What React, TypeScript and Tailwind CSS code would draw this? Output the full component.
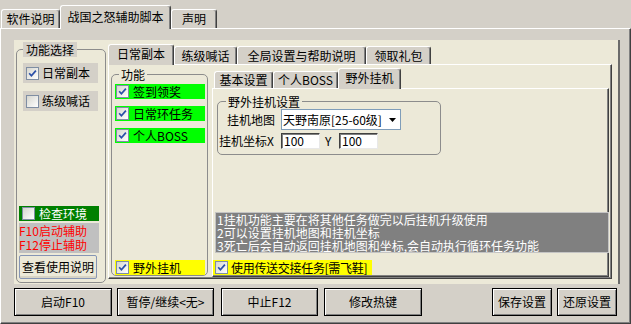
import React from 'react';
import clsx from 'clsx';

const Check = ({ checked = false }: { checked?: boolean }) => (
  <span className="inline-flex w-[13px] h-[13px] shrink-0 items-center justify-center border border-[#7f8ea3] bg-linear-to-br from-[#d6d6cf] to-white">
    {checked && (
      <svg width="9" height="9" viewBox="0 0 9 9">
        <path d="M1.2 4.3 L3.4 6.8 L7.9 1.6" fill="none" stroke="#2a4fa8" strokeWidth="1.7" />
      </svg>
    )}
  </span>
);

const Tab = ({
  children,
  active = false,
  className,
}: {
  children: React.ReactNode;
  active?: boolean;
  className: string;
}) => (
  <div
    className={clsx(
      'flex items-center justify-center shrink-0 bg-[#d4d0c8] border-t border-l border-white border-r border-r-[#404040] rounded-t-[3px] shadow-[inset_-1px_0_0_#808080] whitespace-nowrap',
      active && 'relative z-10 -mb-px pb-[2px]',
      className,
    )}
  >
    {children}
  </div>
);

const WinButton = ({ children, className }: { children: React.ReactNode; className: string }) => (
  <div
    className={clsx(
      'flex items-center justify-center shrink-0 h-[28px] border border-black bg-[#d4d0c8] shadow-[inset_1px_1px_0_#ffffff,inset_-1px_-1px_0_#808080] whitespace-nowrap',
      className,
    )}
  >
    {children}
  </div>
);

const Field = ({ children, className }: { children: React.ReactNode; className: string }) => (
  <div
    className={clsx(
      'h-[16px] bg-white border border-t-[#404040] border-l-[#404040] border-r-[#e8e8e8] border-b-[#e8e8e8] shadow-[inset_1px_1px_0_#808080] pl-[2px] leading-[14px]',
      className,
    )}
  >
    {children}
  </div>
);

const App = () => {
  return (
    <div className="w-[631px] h-[324px] bg-[#d4d0c8] overflow-hidden font-['Noto_Sans_CJK_SC','Noto_Sans',sans-serif] text-[12px] leading-[14px] text-black">
      {/* top tabs */}
      <div className="flex items-end h-[28px] pl-[1px]">
        <Tab className="w-[59px] h-[19px]">软件说明</Tab>
        <Tab active className="w-[111px] h-[24px]">
          战国之怒辅助脚本
        </Tab>
        <Tab className="w-[46px] h-[19px]">声明</Tab>
      </div>

      {/* main page */}
      <div className="w-[631px] h-[296px] border-t border-l border-white border-r border-b border-r-[#404040] border-b-[#404040] shadow-[inset_-1px_-1px_0_#808080] pt-[11px] pl-[13px]">
        <div className="flex w-[606px] h-[244px] bg-[#ece9d8] border-r-2 border-r-[#6b6b6b]">
          {/* 功能选择 */}
          <fieldset className="ml-[2px] mt-[2px] w-[90px] h-[241px] border border-[#8c8c8c] rounded-[5px] shrink-0">
            <legend className="ml-[6px] px-[3px] bg-[#d4d0c8] leading-[15px]">功能选择</legend>
            <div className="flex flex-col h-[225px] whitespace-nowrap">
              <div className="mt-[6px] ml-[6px] w-[75px] h-[20px] bg-[#d4d0c8] flex items-center pl-[3px] gap-[3px]">
                <Check checked />
                日常副本
              </div>
              <div className="mt-[8px] ml-[6px] w-[75px] h-[20px] bg-[#d4d0c8] flex items-center pl-[3px] gap-[3px]">
                <Check />
                练级喊话
              </div>
              <div className="mt-auto ml-[2px] mb-[3px] w-[80px] flex flex-col gap-[2px]">
                <div className="h-[15px] bg-[#008000] text-white flex items-center pl-[3px] gap-[4px]">
                  <Check />
                  检查环境
                </div>
                <div className="h-[30px] bg-[#c0c0c0] text-[#ff0000] pt-[1px]">
                  <div>F10启动辅助</div>
                  <div>F12停止辅助</div>
                </div>
                <div className="w-[78px] h-[24px] flex items-center justify-center border border-[#8595b5] rounded-[2px] bg-[#ece9d8] shadow-[inset_0_-2px_0_#d8d4c4]">
                  查看使用说明
                </div>
              </div>
            </div>
          </fieldset>

          {/* 日常副本 tab control */}
          <div className="ml-[2px] flex flex-col">
            <div className="mt-[4px] flex items-end h-[20px]">
              <Tab active className="w-[66px] h-[21px]">
                日常副本
              </Tab>
              <Tab className="w-[63px] h-[18px]">练级喊话</Tab>
              <Tab className="w-[129px] h-[18px]">全局设置与帮助说明</Tab>
              <Tab className="w-[65px] h-[18px]">领取礼包</Tab>
            </div>
            <div className="flex w-[504px] h-[215px] border-t border-l border-white border-r border-b border-r-[#404040] border-b-[#404040] shadow-[inset_-1px_-1px_0_#808080]">
              {/* 功能 */}
              <fieldset className="ml-[2px] mt-[2px] w-[97px] h-[209px] border border-[#8c8c8c] rounded-[5px] shrink-0">
                <legend className="ml-[7px] px-[2px] leading-[15px]">功能</legend>
                <div className="flex flex-col h-[193px] pl-[3px] whitespace-nowrap">
                  <div className="mt-[2px] w-[90px] h-[15px] bg-[#00ff00] flex items-center pl-[1px] gap-[4px]">
                    <Check checked />
                    签到领奖
                  </div>
                  <div className="mt-[7px] w-[90px] h-[15px] bg-[#00ff00] flex items-center pl-[1px] gap-[4px]">
                    <Check checked />
                    日常环任务
                  </div>
                  <div className="mt-[7px] w-[90px] h-[15px] bg-[#00ff00] flex items-center pl-[1px] gap-[4px]">
                    <Check checked />
                    个人BOSS
                  </div>
                  <div className="mt-auto w-[90px] h-[15px] bg-[#ffff00] flex items-center pl-[1px] gap-[4px]">
                    <Check checked />
                    野外挂机
                  </div>
                </div>
              </fieldset>

              {/* 野外挂机 tab control */}
              <div className="ml-[4px] mt-[3px] flex flex-col">
                <div className="flex items-end h-[20px] pl-[2px]">
                  <Tab className="w-[59px] h-[17px]">基本设置</Tab>
                  <Tab className="w-[65px] h-[17px]">个人BOSS</Tab>
                  <Tab active className="w-[63px] h-[21px]">
                    野外挂机
                  </Tab>
                </div>
                <div className="flex flex-col w-[397px] h-[189px] border-t border-l border-white border-r border-b border-r-[#404040] border-b-[#404040] shadow-[inset_-1px_-1px_0_#808080]">
                  <fieldset className="ml-[4px] mt-[5px] w-[224px] h-[61px] border border-[#8c8c8c] rounded-[5px] shrink-0">
                    <legend className="ml-[8px] px-[2px] leading-[15px]">野外挂机设置</legend>
                    <div className="flex items-center h-[21px] whitespace-nowrap">
                      <span className="ml-[9px] w-[48px]">挂机地图</span>
                      <div className="ml-[6px] w-[120px] h-[21px] bg-white border border-[#7f9db9] flex items-center pl-[1px] pr-[4px]">
                        <span>天野南原[25-60级]</span>
                        <svg className="ml-auto" width="7" height="4" viewBox="0 0 7 4">
                          <polygon points="0,0 7,0 3.5,4" fill="#000" />
                        </svg>
                      </div>
                    </div>
                    <div className="flex items-center mt-[3px] h-[16px] whitespace-nowrap">
                      <span className="ml-[1px] w-[62px]">挂机坐标X</span>
                      <Field className="w-[39px]">100</Field>
                      <span className="ml-[5px] w-[14px]">Y</span>
                      <Field className="w-[39px]">100</Field>
                    </div>
                  </fieldset>
                  <div className="ml-[2px] mt-[57px] w-[394px] h-[41px] bg-[#808080] border border-[#c4c4c4] text-white leading-[13px] pl-[1px] whitespace-nowrap">
                    <div>1挂机功能主要在将其他任务做完以后挂机升级使用</div>
                    <div>2可以设置挂机地图和挂机坐标</div>
                    <div>3死亡后会自动返回挂机地图和坐标,会自动执行循环任务功能</div>
                  </div>
                  <div className="mt-[7px] w-[159px] h-[15px] bg-[#ffff00] flex items-center pl-[2px] gap-[3px] whitespace-nowrap tracking-[-0.3px]">
                    <Check checked />
                    使用传送交接任务[需飞鞋]
                  </div>
                </div>
              </div>
            </div>
          </div>
        </div>

        {/* bottom buttons */}
        <div className="flex mt-[4px]">
          <WinButton className="w-[98px]">启动F10</WinButton>
          <WinButton className="ml-[5px] w-[97px]">暂停/继续&lt;无&gt;</WinButton>
          <WinButton className="ml-[7px] w-[97px]">中止F12</WinButton>
          <WinButton className="ml-[6px] w-[98px]">修改热键</WinButton>
          <WinButton className="ml-[70px] w-[60px]">保存设置</WinButton>
          <WinButton className="ml-[5px] w-[60px]">还原设置</WinButton>
        </div>
      </div>
    </div>
  );
};

export default App;
